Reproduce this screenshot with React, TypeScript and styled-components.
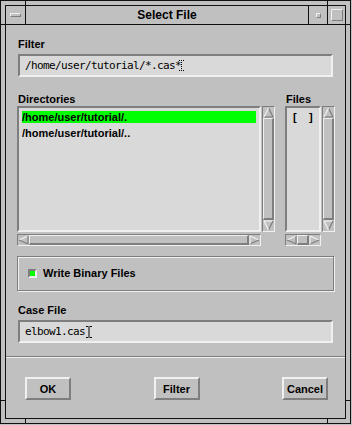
import styled, { createGlobalStyle } from "styled-components"

const BG = '#c0c0c0'
const FIELD = '#d9d9d9'
const DARK = '#7e7e7e'
const LIGHT = '#f0f0f0'
const FRAME = '#101010'
const SELECT = '#00ff00'

const GlobalStyle = createGlobalStyle`
    html, body {
        margin: 0;
        padding: 0;
        background: ${BG};
        overflow: hidden;
    }
    body {
        font-family: "Liberation Sans", Arial, Helvetica, sans-serif;
        color: #000;
    }
`

const Window = styled.div`
    position: relative;
    box-sizing: border-box;
    width: 351px;
    height: 424px;
    padding: 4px;
    border: 1px solid ${FRAME};
    background: ${BG};
`

// little notches of the resize frame at the corners
const CornerMark = styled.span<{ $top?: number; $bottom?: number; $left?: number; $right?: number; $w: number; $h: number }>`
    position: absolute;
    background: ${FRAME};
    width: ${p => p.$w}px;
    height: ${p => p.$h}px;
    ${p => p.$top !== undefined ? `top: ${p.$top}px;` : ''}
    ${p => p.$bottom !== undefined ? `bottom: ${p.$bottom}px;` : ''}
    ${p => p.$left !== undefined ? `left: ${p.$left}px;` : ''}
    ${p => p.$right !== undefined ? `right: ${p.$right}px;` : ''}
`

const Inner = styled.div`
    box-sizing: border-box;
    height: 100%;
    border: 1px solid ${FRAME};
    display: flex;
    flex-direction: column;
`

const TitleBar = styled.div`
    display: flex;
    height: 18px;
    border-bottom: 1px solid ${FRAME};
`

const TitleButton = styled.div<{ $width: number; $side: 'left' | 'right' }>`
    width: ${p => p.$width}px;
    display: flex;
    align-items: center;
    justify-content: center;
    ${p => p.$side === 'left' ? `border-left: 1px solid ${FRAME};` : `border-right: 1px solid ${FRAME};`}
`

const Raised = styled.span<{ $w: number; $h: number }>`
    display: block;
    box-sizing: border-box;
    width: ${p => p.$w}px;
    height: ${p => p.$h}px;
    border: 1px solid;
    border-color: ${LIGHT} ${DARK} ${DARK} ${LIGHT};
`

const Title = styled.div`
    flex: 1;
    text-align: center;
    font-size: 12px;
    font-weight: bold;
    line-height: 18px;
`

const Content = styled.div`
    display: flex;
    flex-direction: column;
    padding: 0 10px 0 11px;
`

const Label = styled.div<{ $top?: number }>`
    font-size: 11px;
    font-weight: bold;
    line-height: 13px;
    padding-left: 1px;
    margin-top: ${p => p.$top ?? 0}px;
`

const TextField = styled.div`
    box-sizing: border-box;
    height: 23px;
    margin: 3px 2px 0 1px;
    padding-left: 5px;
    border: 2px solid;
    border-color: ${DARK} ${LIGHT} ${LIGHT} ${DARK};
    background: ${FIELD};
    font-family: "DejaVu Sans Mono", "Liberation Mono", monospace;
    font-size: 11px;
    letter-spacing: -0.62px;
    line-height: 19px;
    white-space: pre;
    display: flex;
    align-items: center;
`

const Lists = styled.div`
    display: flex;
    gap: 10px;
    margin-top: 16px;
`

const Column = styled.div`
    display: flex;
    flex-direction: column;
`

const Panel = styled.div<{ $listWidth: number }>`
    display: grid;
    grid-template-columns: ${p => p.$listWidth}px 13px;
    grid-template-rows: 126px 12px;
    column-gap: 1px;
    row-gap: 2px;
`

const List = styled.div`
    box-sizing: border-box;
    padding: 3px;
    border: 2px solid;
    border-color: ${DARK} ${LIGHT} ${LIGHT} ${DARK};
    background: ${FIELD};
    overflow: hidden;
`

const ListRow = styled.div<{ $selected?: boolean; $indent?: number }>`
    height: 12px;
    line-height: 12px;
    margin-bottom: 4px;
    padding-left: ${p => p.$indent ?? 0}px;
    font-size: 11px;
    font-weight: bold;
    white-space: pre;
    background: ${p => p.$selected ? SELECT : 'transparent'};
`

const Trough = styled.div<{ $vertical?: boolean }>`
    display: flex;
    flex-direction: ${p => p.$vertical ? 'column' : 'row'};
    box-sizing: border-box;
    border: 1px solid;
    border-color: ${DARK} ${LIGHT} ${LIGHT} ${DARK};
    background: ${BG};
`

const Thumb = styled.div`
    flex: 1;
    box-sizing: border-box;
    border-style: solid;
    border-width: 1px 2px 2px 1px;
    border-color: ${LIGHT} ${DARK} ${DARK} ${LIGHT};
`

const ArrowSvg = styled.svg`
    display: block;
    flex: none;
`

const FrameBox = styled.div`
    box-sizing: border-box;
    height: 35px;
    margin: 10px 1px 0 0;
    padding-left: 10px;
    border: 1px solid ${DARK};
    box-shadow: inset 1px 1px 0 ${LIGHT}, 1px 1px 0 ${LIGHT};
    display: flex;
    align-items: center;
`

const CheckBox = styled.span<{ $checked?: boolean }>`
    box-sizing: border-box;
    width: 9px;
    height: 9px;
    margin-right: 6px;
    border: 2px solid;
    border-color: ${DARK} ${LIGHT} ${LIGHT} ${DARK};
    background: ${p => p.$checked ? SELECT : BG};
`

const CheckLabel = styled.span`
    font-size: 11px;
    font-weight: bold;
    line-height: 13px;
`

const Separator = styled.div`
    margin-top: 13px;
    border-top: 1px solid ${DARK};
    border-bottom: 1px solid ${LIGHT};
`

const ButtonRow = styled.div`
    display: flex;
    justify-content: space-between;
    margin-top: 19px;
    padding: 0 17px 0 19px;
`

const PushButton = styled.button`
    box-sizing: border-box;
    width: 46px;
    height: 23px;
    padding: 0;
    border: 2px solid;
    border-color: ${LIGHT} ${DARK} ${DARK} ${LIGHT};
    background: ${BG};
    font-family: inherit;
    font-size: 11px;
    font-weight: bold;
    color: #000;
`

type Dir = 'up' | 'down' | 'left' | 'right'

const ARROWS: Record<Dir, { pts: number[][]; shades: string[] }> = {
    up: { pts: [[5.5, 1], [10, 10], [1, 10]], shades: [DARK, DARK, LIGHT] },
    down: { pts: [[1, 1], [10, 1], [5.5, 10]], shades: [LIGHT, DARK, LIGHT] },
    left: { pts: [[1, 5], [10, 1], [10, 9]], shades: [LIGHT, DARK, DARK] },
    right: { pts: [[1, 1], [10, 5], [1, 9]], shades: [LIGHT, DARK, LIGHT] },
}

const Arrow = ({ dir }: { dir: Dir }) => {
    const { pts, shades } = ARROWS[dir]
    const h = dir === 'up' || dir === 'down' ? 11 : 10
    return (
        <ArrowSvg width={11} height={h} viewBox={`0 0 11 ${h}`}>
            <polygon points={pts.map(p => p.join(',')).join(' ')} fill={BG} />
            {pts.map((p, i) => {
                const q = pts[(i + 1) % 3]
                return <line key={i} x1={p[0]} y1={p[1]} x2={q[0]} y2={q[1]} stroke={shades[i]} strokeWidth={1.2} />
            })}
        </ArrowSvg>
    )
}

const ScrollBar = ({ vertical }: { vertical?: boolean }) => (
    <Trough $vertical={vertical}>
        <Arrow dir={vertical ? 'up' : 'left'} />
        <Thumb />
        <Arrow dir={vertical ? 'down' : 'right'} />
    </Trough>
)

// stippled insertion cursor of an unfocused text field
const IdleCursor = () => (
    <svg width={5} height={13} viewBox="0 0 5 13" style={{ marginLeft: -2 }}>
        {[0, 2, 4].map(x => <rect key={'t' + x} x={x} y={1} width={1} height={1} fill="#000" />)}
        {[3, 5, 7, 9].map(y => <rect key={'m' + y} x={2} y={y} width={1} height={1} fill="#000" />)}
        {[0, 2, 4].map(x => <rect key={'b' + x} x={x} y={11} width={1} height={1} fill="#000" />)}
    </svg>
)

const MousePointer = () => (
    <svg width={6} height={12} viewBox="0 0 6 12" style={{ marginLeft: 1 }}>
        <path d="M0 0.5H2.5M3.5 0.5H6M3 1V11M0 11.5H2.5M3.5 11.5H6" stroke="#000" strokeWidth={1} fill="none" />
    </svg>
)

export default function App() {
    return (
        <>
            <GlobalStyle />
            <Window>
                <CornerMark $top={0} $left={24} $w={1} $h={4} />
                <CornerMark $top={0} $left={326} $w={1} $h={4} />
                <CornerMark $bottom={0} $left={24} $w={1} $h={4} />
                <CornerMark $bottom={0} $left={326} $w={1} $h={4} />
                <CornerMark $top={23} $left={0} $w={4} $h={1} />
                <CornerMark $top={23} $right={0} $w={4} $h={1} />
                <CornerMark $top={399} $left={0} $w={4} $h={1} />
                <CornerMark $top={399} $right={0} $w={4} $h={1} />
                <Inner>
                    <TitleBar>
                        <TitleButton $width={19} $side="right">
                            <Raised $w={11} $h={4} />
                        </TitleButton>
                        <Title>Select File</Title>
                        <TitleButton $width={18} $side="left">
                            <Raised $w={5} $h={5} />
                        </TitleButton>
                        <TitleButton $width={17} $side="left">
                            <Raised $w={12} $h={12} />
                        </TitleButton>
                    </TitleBar>

                    <Content>
                        <Label $top={13}>Filter</Label>
                        <TextField>/home/user/tutorial/*.cas*<IdleCursor /></TextField>

                        <Lists>
                            <Column>
                                <Label>Directories</Label>
                                <Panel $listWidth={244}>
                                    <List>
                                        <ListRow $selected>/home/user/tutorial/.</ListRow>
                                        <ListRow>/home/user/tutorial/..</ListRow>
                                    </List>
                                    <ScrollBar vertical />
                                    <ScrollBar />
                                </Panel>
                            </Column>
                            <Column>
                                <Label>Files</Label>
                                <Panel $listWidth={36}>
                                    <List>
                                        <ListRow $indent={3}>{'[    ]'}</ListRow>
                                    </List>
                                    <ScrollBar vertical />
                                    <ScrollBar />
                                </Panel>
                            </Column>
                        </Lists>

                        <FrameBox>
                            <CheckBox $checked />
                            <CheckLabel>Write Binary Files</CheckLabel>
                        </FrameBox>

                        <Label $top={13}>Case File</Label>
                        <TextField>elbow1.cas<MousePointer /></TextField>
                    </Content>

                    <Separator />

                    <ButtonRow>
                        <PushButton>OK</PushButton>
                        <PushButton>Filter</PushButton>
                        <PushButton>Cancel</PushButton>
                    </ButtonRow>
                </Inner>
            </Window>
        </>
    )
}
